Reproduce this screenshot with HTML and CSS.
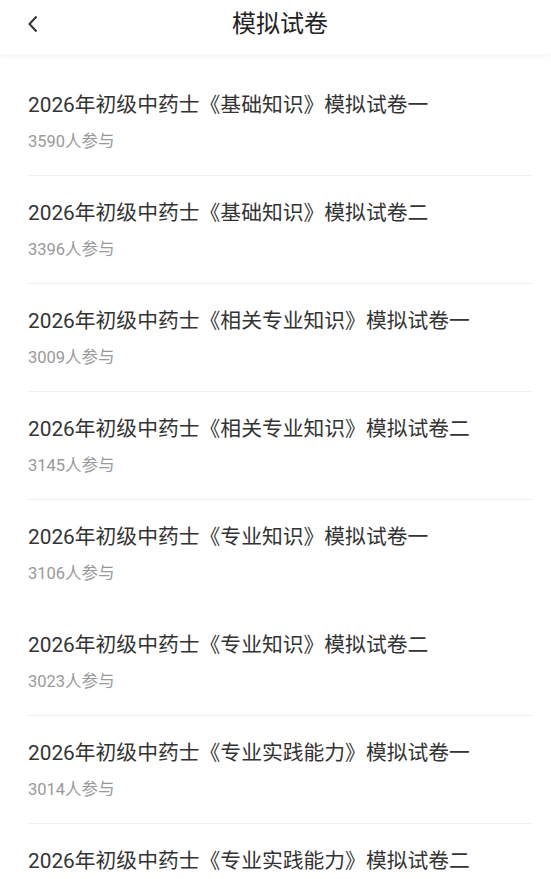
FILE: index.html
```html
<!DOCTYPE html>
<html lang="zh-CN">
<head>
    <meta charset="UTF-8">
    <meta name="viewport" content="width=device-width, initial-scale=1.0">
    <title>模拟试卷</title>
    <link rel="stylesheet" href="styles.css">
</head>
<body>
    <div class="header">
        <span class="back">
            <svg width="12" height="18" viewBox="0 0 12 18"><path d="M9.5 1.5 L2.5 9 L9.5 16.5" fill="none" stroke="#333" stroke-width="2"/></svg>
        </span>
        <h1>模拟试卷</h1>
    </div>

    <!-- Paper list -->
    <div class="list">
        <div class="item">
            <div class="title">2026年初级中药士《基础知识》模拟试卷一</div>
            <div class="count">3590人参与</div>
        </div>
        <div class="item">
            <div class="title">2026年初级中药士《基础知识》模拟试卷二</div>
            <div class="count">3396人参与</div>
        </div>
        <div class="item">
            <div class="title">2026年初级中药士《相关专业知识》模拟试卷一</div>
            <div class="count">3009人参与</div>
        </div>
        <div class="item">
            <div class="title">2026年初级中药士《相关专业知识》模拟试卷二</div>
            <div class="count">3145人参与</div>
        </div>
        <div class="item no-line">
            <div class="title">2026年初级中药士《专业知识》模拟试卷一</div>
            <div class="count">3106人参与</div>
        </div>
        <div class="item">
            <div class="title">2026年初级中药士《专业知识》模拟试卷二</div>
            <div class="count">3023人参与</div>
        </div>
        <div class="item">
            <div class="title">2026年初级中药士《专业实践能力》模拟试卷一</div>
            <div class="count">3014人参与</div>
        </div>
        <div class="item">
            <div class="title">2026年初级中药士《专业实践能力》模拟试卷二</div>
        </div>
    </div>
</body>
</html>
```

FILE: styles.css
```css
* {
    margin: 0;
    padding: 0;
    box-sizing: border-box;
}

body {
    font-family: Roboto, 'Noto Sans CJK SC', sans-serif;
    background: #fff;
    color: #333;
}

/* Header */
.header {
    height: 54px;
    position: relative;
    display: flex;
    align-items: center;
    justify-content: center;
    background: #fff;
    box-shadow: 0 2px 6px rgba(0, 0, 0, 0.05);
}

.header h1 {
    font-size: 24px;
    font-weight: 400;
    color: #222;
    margin-top: -12px;
    padding-left: 9px;
}

.back {
    position: absolute;
    left: 27px;
    top: 15px;
    display: flex;
}

/* List */
.list {
    padding: 14px 19px 0 28px;
}

.item {
    padding: 23px 0 23px;
    border-bottom: 1px solid #f0f0f0;
}

.item.no-line {
    border-bottom-color: transparent;
}

.title {
    font-size: 20.8px;
    line-height: 28px;
    color: #333;
}

.count {
    margin-top: 13px;
    font-size: 16.5px;
    line-height: 20px;
    color: #999;
}
```
